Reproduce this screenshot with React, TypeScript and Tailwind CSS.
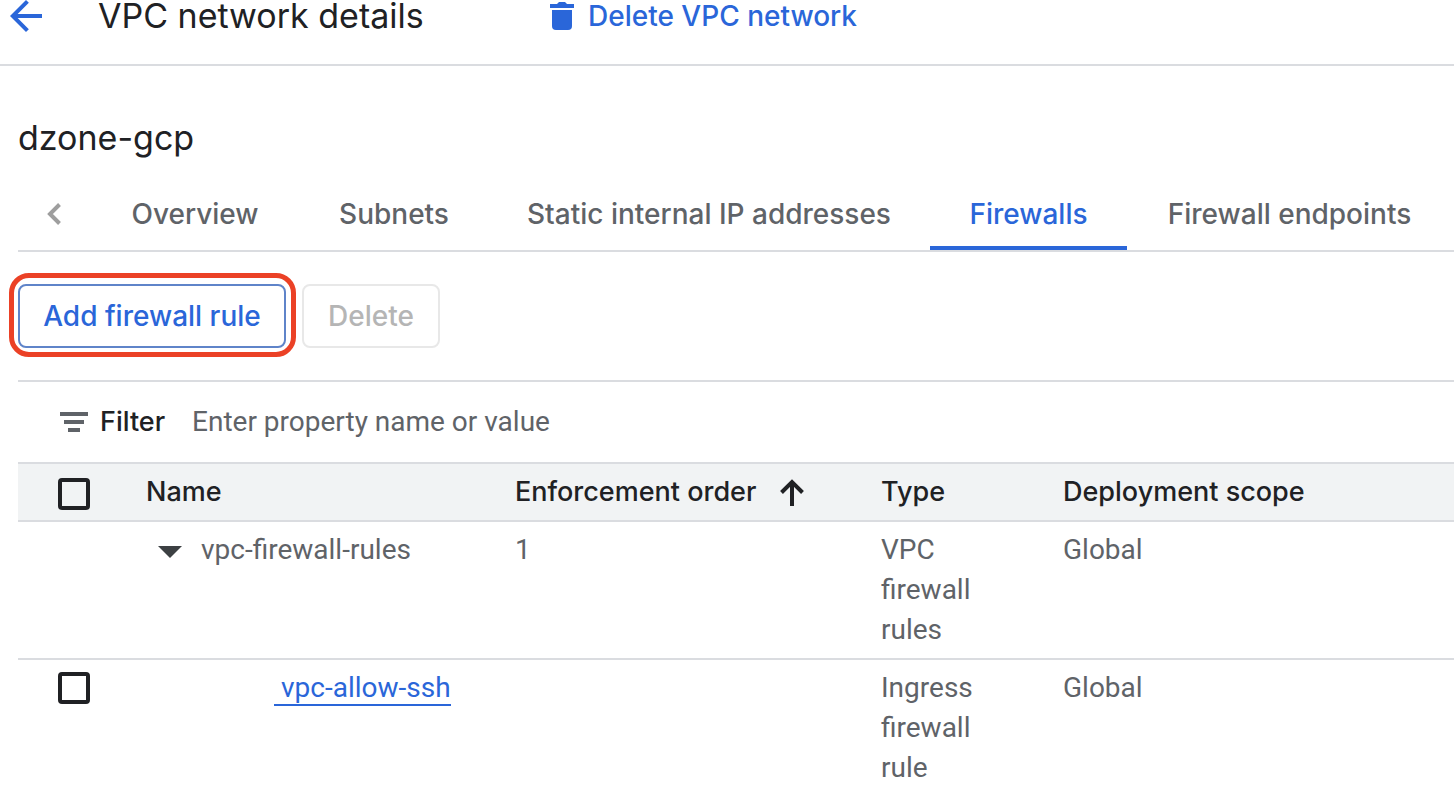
const tabs = [
  { label: "Overview", width: "w-[210px]" },
  { label: "Subnets", width: "w-[188px]" },
  { label: "Static internal IP addresses", width: "w-[442px]" },
  { label: "Firewalls", width: "w-[197px]", active: true },
  { label: "Firewall endpoints", width: "w-[325px]" },
]

const checkboxClass =
  "block size-8 appearance-none rounded-[4px] border-4 border-[#202124] checked:bg-[#2a66d9]"

function BackIcon() {
  return (
    <svg className="size-8" viewBox="4 4 16 16" fill="currentColor" aria-hidden="true">
      <path d="M20 11H7.83l5.59-5.59L12 4l-8 8 8 8 1.41-1.41L7.83 13H20v-2z" />
    </svg>
  )
}

function TrashIcon() {
  return (
    <svg className="h-7 w-6" viewBox="0 0 24 28" fill="currentColor" aria-hidden="true">
      <path d="M7 2l2-2h6l2 2h7v4H0V2z" />
      <path d="M2 8h20v16a4 4 0 0 1-4 4H6a4 4 0 0 1-4-4z" />
    </svg>
  )
}

function ChevronIcon() {
  return (
    <svg className="h-[22px] w-[14px]" viewBox="0 0 14 22" fill="none" stroke="currentColor" strokeWidth="4" aria-hidden="true">
      <path d="M12.5 1.5L3 11l9.5 9.5" />
    </svg>
  )
}

function FilterIcon() {
  return (
    <svg className="h-5 w-7" viewBox="0 0 28 20" fill="#5f6368" aria-hidden="true">
      <path d="M0 0h28v4H0zM4 8h20v4H4zM8 16h12v4H8z" />
    </svg>
  )
}

function SortIcon() {
  return (
    <svg className="h-[27px] w-6" viewBox="0 0 24 27" fill="none" stroke="currentColor" strokeWidth="4" aria-hidden="true">
      <path d="M12 27V3M1.5 13.5L12 3l10.5 10.5" />
    </svg>
  )
}

export default function App() {
  return (
    <div className="bg-white font-['Roboto','Liberation_Sans',sans-serif] text-[28px] leading-10 text-[#5f6368]">
      {/* Page header */}
      <header className="flex h-[66px] items-start border-b-2 border-[#dadce0] pl-[10px] font-['Inter',sans-serif]">
        <div className="flex h-8 items-center">
          <button type="button" aria-label="Back" className="text-[#2a66d9]">
            <BackIcon />
          </button>
          <h1 className="ml-14 w-[452px] text-[34px] leading-8 whitespace-nowrap text-[#202124]">
            VPC network details
          </h1>
          <button type="button" className="flex items-center gap-[14px] text-[28px] leading-8 font-medium whitespace-nowrap text-[#2a66d9]">
            <TrashIcon />
            Delete VPC network
          </button>
        </div>
      </header>

      <main className="pl-[18px]">
        <h2 className="pt-[52px] font-['Inter',sans-serif] text-[34px] text-[#202124]">dzone-gcp</h2>

        {/* Tabs */}
        <nav className="mt-[18px] flex h-19 border-b-2 border-[#dadce0] font-['Inter',sans-serif] text-[28px] font-medium">
          <button type="button" aria-label="Scroll tabs left" className="flex w-18 items-center justify-center pt-0.5 text-[#9e9e9e]">
            <ChevronIcon />
          </button>
          {tabs.map((tab) => (
            <a
              key={tab.label}
              href="#"
              className={`shrink-0 border-b-4 pt-[18px] text-center whitespace-nowrap ${tab.width} ${
                tab.active ? "border-[#2a66d9] text-[#2a66d9]" : "border-transparent"
              }`}
            >
              {tab.label}
            </a>
          ))}
        </nav>

        {/* Actions */}
        <div className="flex gap-4 py-8 font-['Inter',sans-serif] text-[28px] font-medium whitespace-nowrap">
          <div className="relative">
            <button type="button" className="h-16 w-[268px] rounded-lg border-2 border-[#5f84c9] text-[#2a66d9]">
              Add firewall rule
            </button>
            <span className="pointer-events-none absolute -top-[11px] -right-[10px] -bottom-[9px] -left-[9px] rounded-[20px] border-5 border-[#eb4126]" />
          </div>
          <button type="button" disabled className="h-16 w-[138px] rounded-lg border-2 border-[#e8e8e8] text-[#b5b5b5]">
            Delete
          </button>
        </div>

        {/* Filter bar */}
        <div className="flex h-[82px] items-center border-t-2 border-[#dadce0] pl-[42px]">
          <FilterIcon />
          <label htmlFor="filter" className="ml-3 w-[92px] font-['Inter',sans-serif] text-[27px] font-medium text-[#202124]">
            Filter
          </label>
          <input
            id="filter"
            type="text"
            placeholder="Enter property name or value"
            className="min-w-0 flex-1 outline-none placeholder:text-[#5f6368]"
          />
        </div>

        {/* Rules */}
        <table className="w-full table-fixed text-left">
          <colgroup>
            <col className="w-[128px]" />
            <col className="w-[369px]" />
            <col className="w-[366px]" />
            <col className="w-[182px]" />
            <col />
          </colgroup>
          <thead className="border-y-2 border-[#dadce0] bg-[#f1f3f4] font-['Inter',sans-serif] text-[27px] text-[#202124]">
            <tr className="h-[58px] align-top whitespace-nowrap *:pt-2 *:font-medium">
              <th className="pl-10">
                <input type="checkbox" aria-label="Select all rules" className={`mt-[6px] ${checkboxClass}`} />
              </th>
              <th>Name</th>
              <th>
                <div className="flex items-center gap-6">
                  Enforcement order
                  <SortIcon />
                </div>
              </th>
              <th>Type</th>
              <th>Deployment scope</th>
            </tr>
          </thead>
          <tbody>
            <tr className="border-b-2 border-[#dadce0] align-top *:py-2">
              <td />
              <td>
                <div className="flex items-center">
                  <button type="button" aria-label="Collapse vpc-firewall-rules" className="mr-[19px] ml-3 pt-1">
                    <svg className="h-3 w-6" viewBox="0 0 24 12" fill="#3c4043" aria-hidden="true">
                      <path d="M0 0h24L12 12z" />
                    </svg>
                  </button>
                  vpc-firewall-rules
                </div>
              </td>
              <td>1</td>
              <td className="pr-16">VPC firewall rules</td>
              <td>Global</td>
            </tr>
            <tr className="align-top *:pt-2">
              <td className="pl-10">
                <input type="checkbox" aria-label="Select vpc-allow-ssh" className={`mt-1 ${checkboxClass}`} />
              </td>
              <td className="pl-32">
                <a href="#" className="border-b-2 border-[#2a66d9] pl-[7px] text-[#2a66d9]">
                  vpc-allow-ssh
                </a>
              </td>
              <td />
              <td className="pr-16">Ingress firewall rule</td>
              <td>Global</td>
            </tr>
          </tbody>
        </table>
      </main>
    </div>
  )
}
